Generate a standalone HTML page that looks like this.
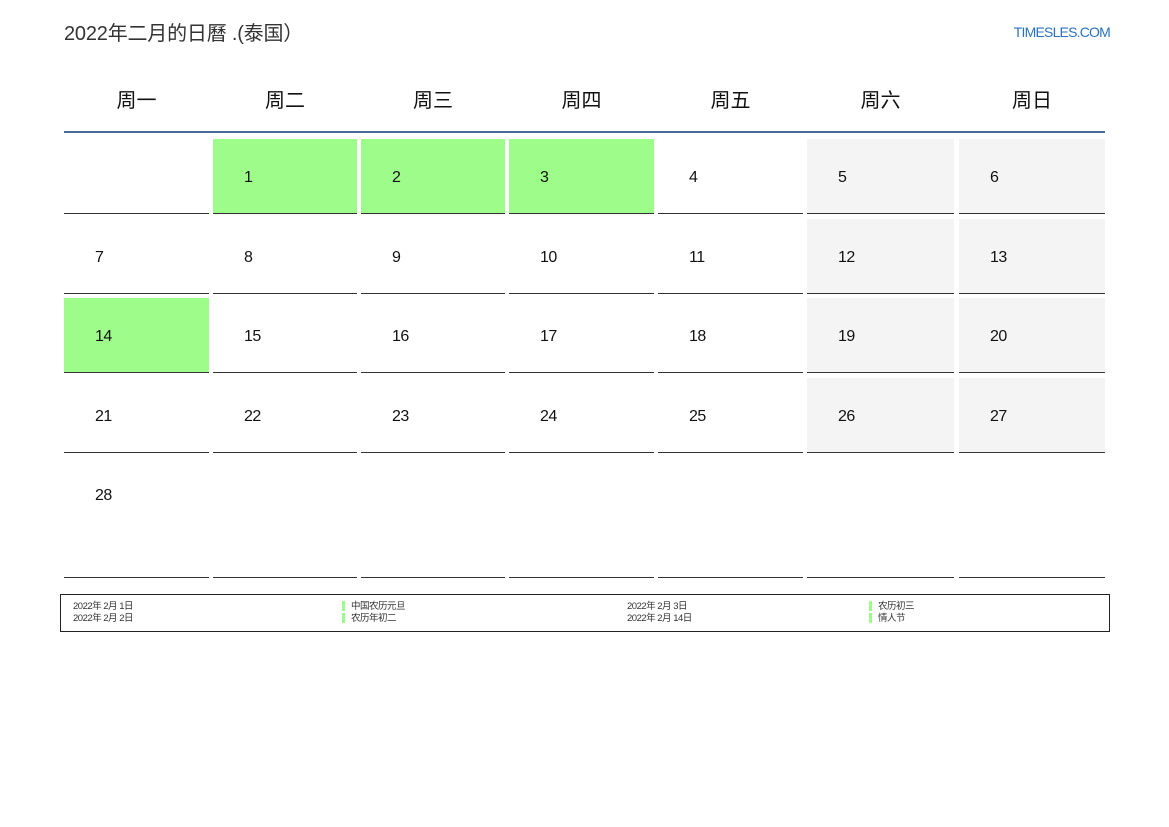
<!DOCTYPE html>
<html><head><meta charset="utf-8"><style>
body{margin:0;width:1169px;height:827px;background:#fff;position:relative;font-family:"Liberation Sans","Noto Sans CJK SC",sans-serif;overflow:hidden}
.a{position:absolute}
.t{left:64px;top:17px;font-size:20px;color:#333;letter-spacing:-0.2px}
.logo{right:59px;top:24px;font-size:14px;color:#2a72c0;letter-spacing:-0.8px}
.h{top:84px;font-size:20px;color:#111;text-align:center}
.c{border-bottom:1px solid #333;box-sizing:border-box;font-size:16px;color:#111;padding-left:31px;letter-spacing:-0.5px}
.g{background:#9dfc8a}.s{background:#f4f4f4}
.lg{font-size:9.5px;color:#333;line-height:12px;letter-spacing:-0.5px}
.bar{width:3px;height:10px;background:#9dfc8a}
</style></head><body>
<div class="a t">2022年二月的日曆 .(泰国）</div>
<div class="a logo">TIMESLES.COM</div>
<div class="a h" style="left:64px;width:145px">周一</div>
<div class="a h" style="left:213px;width:144px">周二</div>
<div class="a h" style="left:361px;width:144px">周三</div>
<div class="a h" style="left:509px;width:145px">周四</div>
<div class="a h" style="left:658px;width:145px">周五</div>
<div class="a h" style="left:807px;width:147px">周六</div>
<div class="a h" style="left:959px;width:146px">周日</div>
<div class="a" style="left:64px;top:131px;width:1041px;height:2px;background:#4a6a9a"></div>
<div id="g"></div>
<script>
var L=[64,213,361,509,658,807,959],W=[145,144,144,145,145,147,146],T=[139,219,298,378,458],H=[75,75,75,75,120];
var green={1:1,2:1,3:1,14:1},h='';
for(var r=0;r<5;r++)for(var c=0;c<7;c++){var d=r*7+c;var cls='a c';if(d>28||d==0)d='';
if(d&&green[d])cls+=' g';else if(c>=5&&r<4)cls+=' s';
var lh=r==4?75:77;
h+='<div class="'+cls+'" style="left:'+L[c]+'px;top:'+T[r]+'px;width:'+W[c]+'px;height:'+H[r]+'px;line-height:'+lh+'px">'+d+'</div>';}
document.getElementById('g').innerHTML=h;
</script>
<div class="a" style="left:60px;top:594px;width:1050px;height:38px;border:1px solid #222;box-sizing:border-box"></div>
<div class="a lg" style="left:73px;top:601px">2022年 2月 1日<br>2022年 2月 2日</div>
<div class="a bar" style="left:342px;top:601px"></div><div class="a bar" style="left:342px;top:613px"></div>
<div class="a lg" style="left:351px;top:601px">中国农历元旦<br>农历年初二</div>
<div class="a lg" style="left:627px;top:601px">2022年 2月 3日<br>2022年 2月 14日</div>
<div class="a bar" style="left:869px;top:601px"></div><div class="a bar" style="left:869px;top:613px"></div>
<div class="a lg" style="left:878px;top:601px">农历初三<br>情人节</div>
</body></html>
